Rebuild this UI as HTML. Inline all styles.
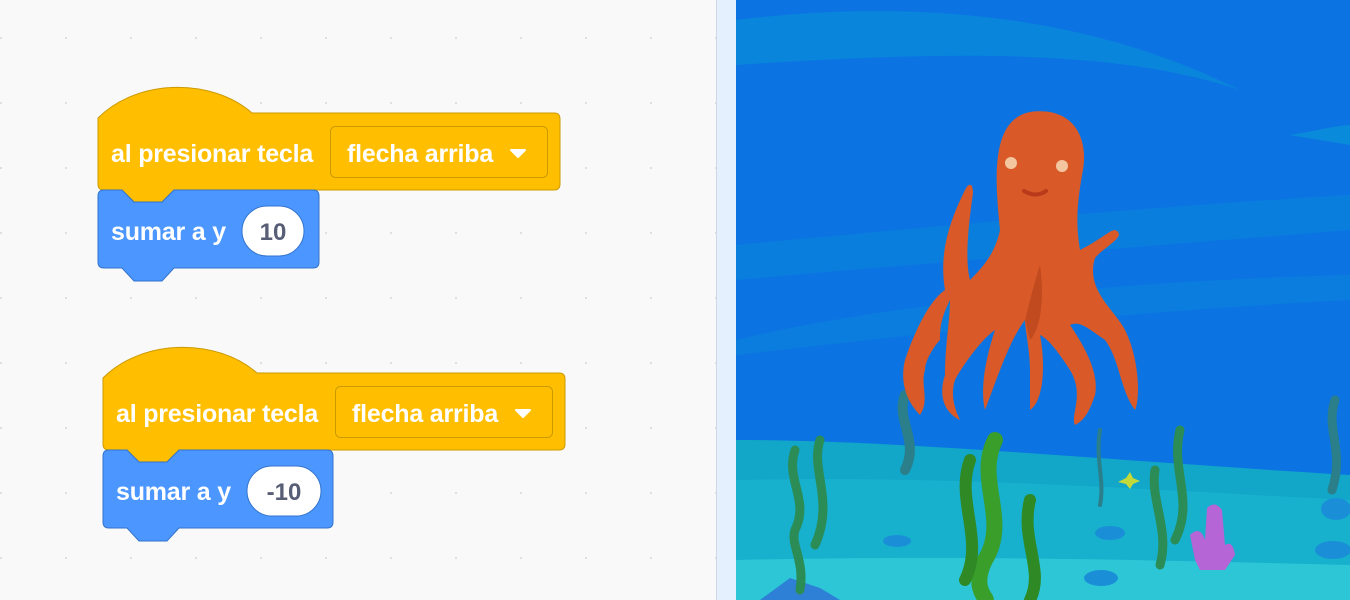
<!DOCTYPE html>
<html><head><meta charset="utf-8"><style>
html,body{margin:0;padding:0;width:1350px;height:600px;overflow:hidden;background:#F9F9F9;font-family:"Liberation Sans",Arial,sans-serif}
svg{position:absolute;left:0;top:0}
</style></head><body>
<svg width="1350" height="600" viewBox="0 0 1350 600">
<defs>
<pattern id="dots" x="0" y="37" width="65" height="65" patternUnits="userSpaceOnUse">
<circle cx="1" cy="1" r="1.1" fill="#dcdcdc"/>
</pattern>
</defs>
<rect x="0" y="0" width="716" height="600" fill="url(#dots)"/>

<!-- group 1 -->
<g>
<path d="M98,118 C138,78 212,78 252,113 L554,113 Q560,113 560,119 L560,184 Q560,190 554,190 L174,190 L162,202 L134,202 L122,190 L104,190 Q98,190 98,184 Z" fill="#FFBF00" stroke="#CC9900" stroke-width="1"/>
<rect x="330.5" y="126.5" width="217" height="51" rx="5" fill="#FFBF00" stroke="#CC9900" stroke-width="1"/>
<text x="111" y="162" font-size="25" font-weight="bold" fill="#fff" letter-spacing="-0.2">al presionar tecla</text>
<text x="347" y="162" font-size="25" font-weight="bold" fill="#fff" letter-spacing="-0.2">flecha arriba</text>
<path d="M511,150 L525,150 L518,157 Z" fill="#fff" stroke="#fff" stroke-width="2" stroke-linejoin="round"/>
<path d="M98,196 Q98,190 104,190 L122,190 L134,202 L162,202 L174,190 L313,190 Q319,190 319,196 L319,262 Q319,268 313,268 L174,268 L162,281 L134,281 L122,268 L104,268 Q98,268 98,262 Z" fill="#4C97FF" stroke="#3373CC" stroke-width="1"/>
<text x="111" y="240" font-size="25" font-weight="bold" fill="#fff" letter-spacing="-0.2">sumar a y</text>
<rect x="242" y="206" width="62" height="50" rx="25" fill="#fff" stroke="#3373CC" stroke-width="1"/>
<text x="273" y="240" font-size="24" font-weight="bold" fill="#575E75" text-anchor="middle">10</text>
</g>

<!-- group 2 -->
<g transform="translate(5,260)">
<path d="M98,118 C138,78 212,78 252,113 L554,113 Q560,113 560,119 L560,184 Q560,190 554,190 L174,190 L162,202 L134,202 L122,190 L104,190 Q98,190 98,184 Z" fill="#FFBF00" stroke="#CC9900" stroke-width="1"/>
<rect x="330.5" y="126.5" width="217" height="51" rx="5" fill="#FFBF00" stroke="#CC9900" stroke-width="1"/>
<text x="111" y="162" font-size="25" font-weight="bold" fill="#fff" letter-spacing="-0.2">al presionar tecla</text>
<text x="347" y="162" font-size="25" font-weight="bold" fill="#fff" letter-spacing="-0.2">flecha arriba</text>
<path d="M511,150 L525,150 L518,157 Z" fill="#fff" stroke="#fff" stroke-width="2" stroke-linejoin="round"/>
<path d="M98,196 Q98,190 104,190 L122,190 L134,202 L162,202 L174,190 L322,190 Q328,190 328,196 L328,262 Q328,268 322,268 L174,268 L162,281 L134,281 L122,268 L104,268 Q98,268 98,262 Z" fill="#4C97FF" stroke="#3373CC" stroke-width="1"/>
<text x="111" y="240" font-size="25" font-weight="bold" fill="#fff" letter-spacing="-0.2">sumar a y</text>
<rect x="242" y="206" width="74" height="50" rx="25" fill="#fff" stroke="#3373CC" stroke-width="1"/>
<text x="279" y="240" font-size="24" font-weight="bold" fill="#575E75" text-anchor="middle">-10</text>
</g>

<!-- stage border -->
<rect x="716" y="0" width="20" height="600" fill="#E5F0FF"/>
<rect x="716" y="0" width="1" height="600" fill="#d0d8e4"/>

<!-- stage -->
<g>
<rect x="736" y="0" width="614" height="600" fill="#0B74E2"/>
<path d="M736,20 C900,0 1080,10 1240,90 C1120,50 960,50 736,65 Z" fill="#0A8ADB" opacity="0.8"/>
<path d="M1290,135 C1320,130 1340,125 1350,125 L1350,145 Z" fill="#0A8ADB"/>
<path d="M736,245 C900,230 1100,210 1350,195 L1350,230 C1100,250 900,265 736,280 Z" fill="#0A86DA" opacity="0.6"/>
<path d="M736,340 C900,300 1150,280 1350,275 L1350,300 C1150,310 950,330 736,355 Z" fill="#0A86DA" opacity="0.5"/>
<path d="M736,440 C900,440 1100,460 1350,475 L1350,600 L736,600 Z" fill="#12A6C8"/>
<path d="M736,480 C950,475 1150,490 1350,500 L1350,600 L736,600 Z" fill="#17B0CD"/>
<path d="M736,560 C950,555 1150,560 1350,565 L1350,600 L736,600 Z" fill="#2DC6D6"/>
<path d="M760,600 L790,578 L820,588 L840,600 Z" fill="#2E7FD6"/>
<ellipse cx="1101" cy="578" rx="17" ry="8" fill="#1A8FD8"/>
<ellipse cx="1333" cy="550" rx="18" ry="9" fill="#1A8FD8"/>
<ellipse cx="897" cy="541" rx="14" ry="6" fill="#1A8FD8"/>
<ellipse cx="1110" cy="533" rx="15" ry="7" fill="#1a8fd8"/>
<ellipse cx="1336" cy="509" rx="15" ry="11" fill="#1a8fd8"/>
<g fill="none" stroke-linecap="round">
<path d="M905,395 C895,420 920,440 905,470" stroke="#2A7F8A" stroke-width="10"/>
<path d="M795,450 C785,480 810,500 795,530 C790,545 805,560 800,590" stroke="#2C8C55" stroke-width="9"/>
<path d="M820,440 C810,470 835,500 815,545" stroke="#2C8C55" stroke-width="9"/>
<path d="M995,440 C975,480 1010,520 985,560 C970,590 990,600 985,600" stroke="#3A9E2A" stroke-width="16"/>
<path d="M970,460 C955,500 985,540 965,580" stroke="#2F8A25" stroke-width="12"/>
<path d="M1030,500 C1020,540 1045,570 1030,600" stroke="#2F8A25" stroke-width="12"/>
<path d="M1180,430 C1170,470 1195,500 1175,540" stroke="#2C8C55" stroke-width="9"/>
<path d="M1155,470 C1150,500 1170,530 1160,565" stroke="#2C8C55" stroke-width="9"/>
<path d="M1335,400 C1325,430 1345,450 1332,490" stroke="#2A7F8A" stroke-width="9"/>
<path d="M1100,430 C1095,460 1105,480 1100,505" stroke="#2A7F8A" stroke-width="4"/>
</g>
<path d="M1195,560 L1190,535 Q1200,525 1205,540 L1207,508 Q1215,500 1222,510 L1225,545 Q1233,540 1235,555 L1225,570 L1200,570 Z" fill="#B565D6"/>
<path d="M1118,482 L1126,478 L1130,472 L1133,478 L1140,481 L1133,484 L1130,489 L1126,484 Z" fill="#C3D93A"/>
<g fill="#D95A28">
<path d="M1000,230 C995,180 990,120 1030,112 C1075,106 1090,140 1082,175 C1078,200 1075,220 1080,250 C1100,240 1110,230 1115,230 C1128,236 1105,246 1095,258 C1085,290 1115,310 1125,330 C1140,360 1140,400 1135,410 C1120,390 1120,360 1105,340 C1090,330 1080,320 1070,325 C1080,340 1100,370 1095,395 C1090,410 1085,420 1075,425 C1070,415 1085,395 1070,370 C1060,355 1050,340 1040,335 C1045,360 1045,400 1030,410 L1030,370 C1030,350 1025,330 1025,320 C1010,340 1000,370 985,410 C980,390 985,360 995,330 C980,340 960,370 955,380 C950,395 955,410 960,420 C940,410 940,390 945,375 C945,345 950,320 950,300 C940,320 940,330 940,340 C935,345 925,360 925,370 C920,385 930,400 920,415 C905,400 900,380 905,360 C915,330 930,300 945,290 C940,260 945,230 965,190 C970,180 975,185 972,200 C968,230 965,260 970,280 C980,270 995,255 1000,230 Z"/>
<path d="M1025,320 C1030,300 1035,280 1040,265 C1045,300 1040,330 1030,340 Z" fill="#C14A1E"/>
<circle cx="1011" cy="163" r="6" fill="#F3C6A0"/>
<circle cx="1062" cy="166" r="6" fill="#F3C6A0"/>
<path d="M1024,191 Q1036,198 1046,191" stroke="#B83A1A" stroke-width="4" fill="none" stroke-linecap="round"/>
</g>
</g>
</svg>
</body></html>
